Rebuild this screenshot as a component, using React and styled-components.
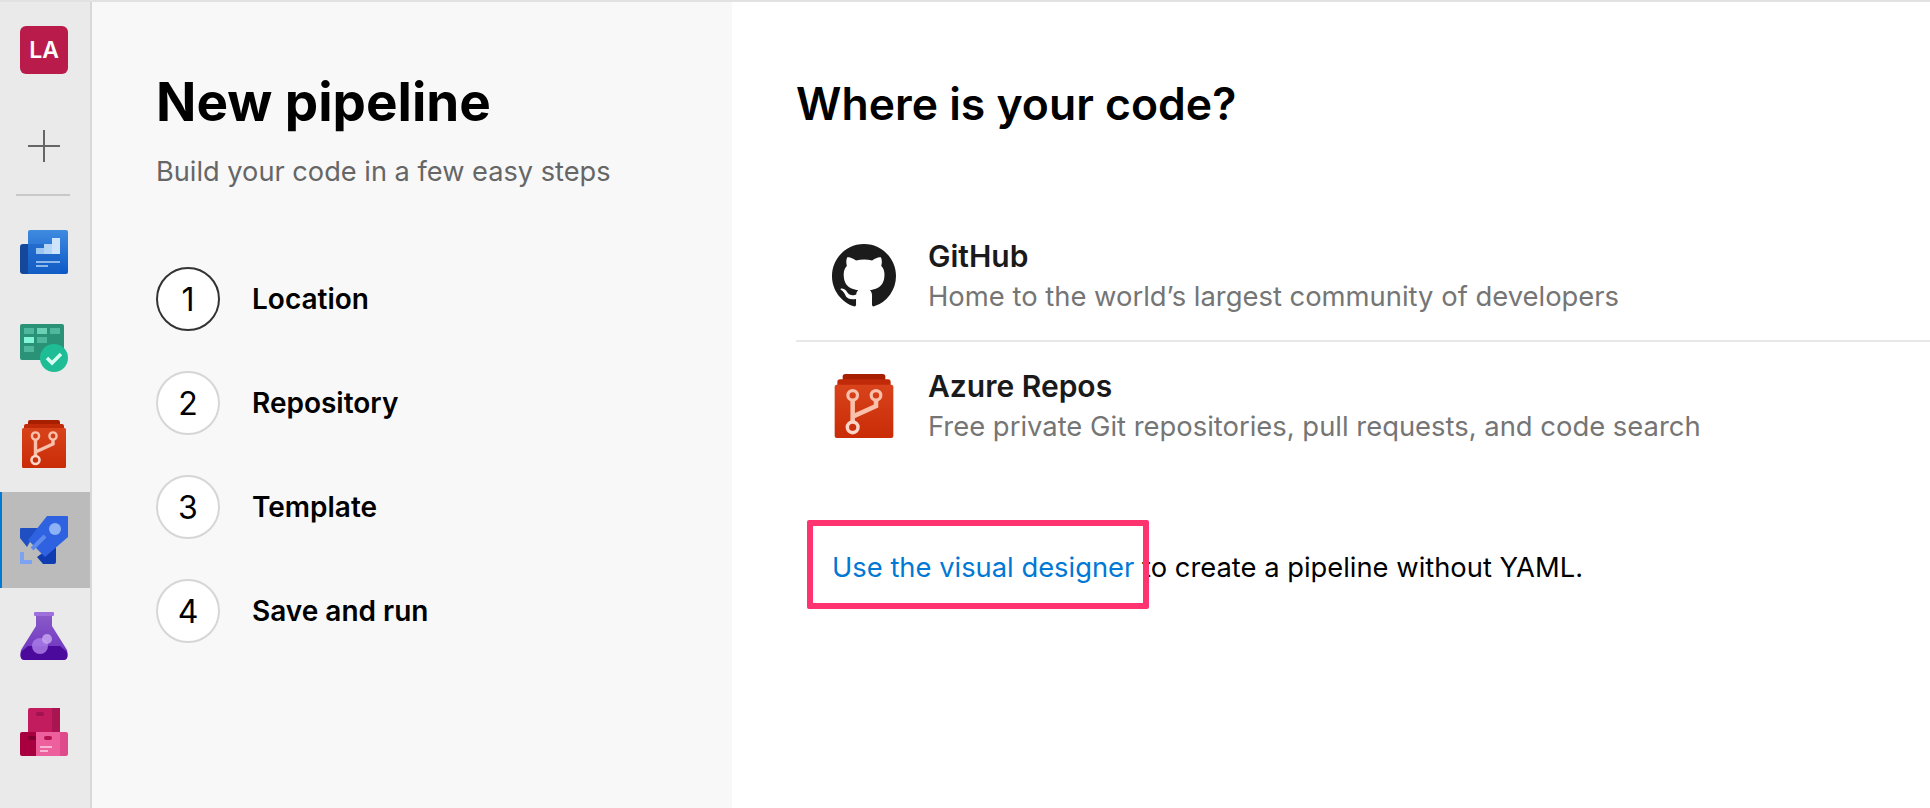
import { createGlobalStyle, styled } from "styled-components";

const GlobalStyle = createGlobalStyle`
  html, body { margin: 0; padding: 0; height: 100%; overflow: hidden; background: #fff; }
  body { font-family: Inter, "Noto Sans", sans-serif; color: #000; }
  * { box-sizing: border-box; }
`;

const Page = styled.div`
  display: flex;
  height: 808px;
  border-top: 2px solid #e2e2e2;
`;

const Sidebar = styled.nav`
  display: flex;
  flex-direction: column;
  width: 92px;
  flex-shrink: 0;
  background: #eaeaea;
  border-right: 2px solid #d8d8d8;
`;

const NavItem = styled.div`
  display: flex;
  align-items: center;
  justify-content: center;
  height: 96px;
  padding-right: 2px;
  background: ${(p) => (p.$active ? "#bbbbbb" : "transparent")};
  box-shadow: ${(p) => (p.$active ? "inset 2px 0 0 #0078d4" : "none")};
`;

const Avatar = styled.div`
  display: flex;
  align-items: center;
  justify-content: center;
  width: 48px;
  height: 48px;
  border-radius: 6px;
  background: #b91c4a;
  color: #fff;
  font-size: 23px;
  font-weight: 600;
`;

const NavDivider = styled.div`
  height: 2px;
  margin: 0 20px 8px 16px;
  background: #c8c8c8;
`;

const StepsPanel = styled.aside`
  width: 640px;
  flex-shrink: 0;
  padding: 68px 0 0 64px;
  background: #f8f8f8;
`;

const Title = styled.h1`
  margin: 0;
  font-size: 53px;
  line-height: 64px;
  font-weight: 700;
`;

const Subtitle = styled.p`
  margin: 20px 0 0;
  font-size: 27.2px;
  line-height: 36px;
  color: #666;
`;

const Steps = styled.ol`
  display: flex;
  flex-direction: column;
  gap: 40px;
  list-style: none;
  margin: 77px 0 0;
  padding: 0;
`;

const Step = styled.li`
  display: flex;
  align-items: center;
  gap: 32px;
  font-size: 28px;
  font-weight: 600;
`;

const StepNumber = styled.span`
  display: flex;
  align-items: center;
  justify-content: center;
  width: 64px;
  height: 64px;
  border-radius: 50%;
  border: 2px solid ${(p) => (p.$current ? "#333" : "#d6d6d6")};
  background: #fff;
  font-size: 32px;
  font-weight: 400;
`;

const Main = styled.main`
  flex: 1;
  padding: 74px 0 0 64px;
`;

const Heading = styled.h2`
  margin: 0;
  font-size: 44.5px;
  line-height: 56px;
  font-weight: 600;
`;

const SourceList = styled.div`
  margin-top: 80px;
`;

const Source = styled.div`
  display: flex;
  align-items: center;
  height: ${(p) => (p.$last ? "128px" : "130px")};
  padding-left: 36px;
  border-bottom: ${(p) => (p.$last ? "none" : "2px solid #e8e8e8")};
`;

const SourceIcon = styled.div`
  display: flex;
  align-items: center;
  justify-content: center;
  width: 64px;
  height: 64px;
  margin-right: 32px;
`;

const SourceName = styled.div`
  font-size: 30px;
  line-height: 40px;
  font-weight: 600;
  color: #1a1a1a;
`;

const SourceDesc = styled.div`
  font-size: 27.4px;
  line-height: 40px;
  color: #757575;
`;

const DesignerNote = styled.p`
  margin: 78px 0 0 36px;
  font-size: 27.35px;
  line-height: 40px;
`;

const DesignerLink = styled.a`
  position: relative;
  color: #0078d4;
`;

const Highlight = styled.span`
  position: absolute;
  left: -25px;
  top: -31px;
  width: 342px;
  height: 89px;
  border: 6px solid #ff3370;
  border-radius: 2px;
`;

function BoardsIcon() {
  return (
    <svg width="48" height="44" viewBox="0 0 48 44">
      <defs>
        <linearGradient id="boards" x1="0" y1="0" x2="0" y2="1">
          <stop offset="0" stopColor="#3f8be0" />
          <stop offset="1" stopColor="#0a58c8" />
        </linearGradient>
      </defs>
      <rect x="0" y="14" width="20" height="30" rx="3" fill="#15489b" />
      <rect x="8" y="0" width="40" height="44" rx="2" fill="url(#boards)" />
      <rect x="8" y="14" width="32" height="30" fill="#1c63c4" opacity="0.55" />
      <rect x="16" y="18" width="8" height="6" fill="#9cc6f2" />
      <rect x="24" y="14" width="8" height="10" fill="#b4d6f6" />
      <rect x="32" y="8" width="8" height="16" fill="#cfe4fa" />
      <rect x="16" y="31" width="24" height="2" fill="#8cb8ee" />
      <rect x="16" y="35" width="12" height="2" fill="#8cb8ee" />
    </svg>
  );
}

function TestPlansIcon() {
  return (
    <svg width="48" height="48" viewBox="0 0 48 48">
      <rect x="0" y="0" width="44" height="36" rx="2" fill="#2a9277" />
      <rect x="4" y="4" width="10" height="6" fill="#4fb89c" />
      <rect x="17" y="4" width="10" height="6" fill="#6bd0b4" />
      <rect x="30" y="4" width="10" height="6" fill="#4fb89c" />
      <rect x="4" y="13" width="10" height="6" fill="#84f5d6" />
      <rect x="17" y="13" width="10" height="6" fill="#4fb89c" />
      <rect x="4" y="22" width="10" height="6" fill="#4fb89c" />
      <circle cx="34" cy="34" r="14" fill="#1fbd95" />
      <path d="M27 34l5 5 9-9" fill="none" stroke="#d6fff2" strokeWidth="3.4" />
    </svg>
  );
}

function ReposIcon({ size = 48 }) {
  return (
    <svg width={size} height={size} viewBox="0 0 48 48">
      <defs>
        <linearGradient id={`repos${size}`} x1="0" y1="0" x2="0" y2="1">
          <stop offset="0" stopColor="#d8431c" />
          <stop offset="1" stopColor="#c92c06" />
        </linearGradient>
      </defs>
      <rect x="8" y="0" width="32" height="6" rx="2" fill="#a81f00" />
      <rect x="4" y="4" width="40" height="8" rx="2" fill="#c12a08" />
      <rect x="2" y="8" width="44" height="40" rx="1.5" fill={`url(#repos${size})`} />
      <path d="M15.5 20V36M33 20V24L15.5 32" fill="none" stroke="#f9c0ac" strokeWidth="3.4" />
      <circle cx="15.5" cy="16" r="3.6" fill="none" stroke="#f9c0ac" strokeWidth="2.4" />
      <circle cx="33" cy="16" r="3.6" fill="none" stroke="#f9c0ac" strokeWidth="2.4" />
      <circle cx="15.5" cy="40" r="4" fill="none" stroke="#fbd5c8" strokeWidth="2.6" />
    </svg>
  );
}

function PipelinesIcon() {
  return (
    <svg width="48" height="48" viewBox="0 0 48 48">
      <path d="M0 13Q0 12 1 12H18L7 31L0 22Z" fill="#1f4fc0" />
      <path d="M36 27V46Q36 48 34 48H23L17 41Z" fill="#0f3cb0" />
      <path d="M27 0H47Q48 0 48 1V21L25 41L8 24Z" fill="#2f62e0" />
      <circle cx="35" cy="13" r="6" fill="#8eb2f6" />
      <path d="M25 20L12 33" stroke="#5f8cec" strokeWidth="4" />
      <path d="M0 36H4V44H12V48H0Z" fill="#7ea2f2" />
    </svg>
  );
}

function TestIcon() {
  return (
    <svg width="48" height="48" viewBox="0 0 48 48">
      <defs>
        <linearGradient id="flask" x1="0" y1="0" x2="0" y2="1">
          <stop offset="0" stopColor="#8a5cc8" />
          <stop offset="1" stopColor="#6b2fc0" />
        </linearGradient>
      </defs>
      <path d="M16 2H32V14L47 38Q49 48 43 48H5Q-1 48 1 38L16 14Z" fill="url(#flask)" />
      <path d="M8 34H40L47 40Q49 48 43 48H5Q-1 48 1 40Z" fill="#4c0a9c" />
      <rect x="14" y="0" width="20" height="4" rx="1" fill="#9f70dc" />
      <circle cx="20" cy="34" r="8" fill="#a87be6" opacity="0.85" />
      <circle cx="27" cy="27" r="5" fill="#c4a4ee" opacity="0.85" />
    </svg>
  );
}

function ArtifactsIcon() {
  return (
    <svg width="48" height="48" viewBox="0 0 48 48">
      <path d="M10 0H32V24H8V2Q8 0 10 0Z" fill="#c21b5e" />
      <rect x="32" y="0" width="8" height="24" fill="#a81550" />
      <rect x="16" y="4" width="8" height="4" rx="2" fill="#a01350" />
      <path d="M2 24H16V48H2Q0 48 0 46V26Q0 24 2 24Z" fill="#a8003f" />
      <rect x="16" y="24" width="24" height="24" fill="#ee5f9e" />
      <path d="M40 24H46Q48 24 48 26V46Q48 48 46 48H40Z" fill="#de4a8a" />
      <rect x="8" y="28" width="8" height="4" rx="2" fill="#7d0030" />
      <rect x="24" y="28" width="8" height="4" rx="2" fill="#b3114f" />
      <rect x="20" y="38" width="12" height="2" fill="#f9b4d2" />
      <rect x="20" y="42" width="8" height="2" fill="#f9b4d2" />
    </svg>
  );
}

function GithubMark() {
  return (
    <svg width="64" height="64" viewBox="0 0 16 16" fill="#1b1b1b">
      <path d="M8 0C3.58 0 0 3.58 0 8c0 3.54 2.29 6.53 5.47 7.59.4.07.55-.17.55-.38 0-.19-.01-.82-.01-1.49-2.01.37-2.53-.49-2.69-.94-.09-.23-.48-.94-.82-1.13-.28-.15-.68-.52-.01-.53.63-.01 1.08.58 1.23.82.72 1.21 1.87.87 2.33.66.07-.52.28-.87.51-1.07-1.78-.2-3.64-.89-3.64-3.95 0-.87.31-1.59.82-2.15-.08-.2-.36-1.02.08-2.12 0 0 .67-.21 2.2.82.64-.18 1.32-.27 2-.27.68 0 1.36.09 2 .27 1.53-1.04 2.2-.82 2.2-.82.44 1.1.16 1.92.08 2.12.51.56.82 1.27.82 2.15 0 3.07-1.87 3.75-3.65 3.95.29.25.54.73.54 1.48 0 1.07-.01 1.93-.01 2.2 0 .21.15.46.55.38A8.013 8.013 0 0016 8c0-4.42-3.58-8-8-8z" />
    </svg>
  );
}

function PlusIcon() {
  return (
    <svg width="32" height="32" viewBox="0 0 32 32">
      <path d="M16 0V32M0 16H32" stroke="#666" strokeWidth="2" />
    </svg>
  );
}

const steps = ["Location", "Repository", "Template", "Save and run"];

export default function App() {
  return (
    <>
      <GlobalStyle />
      <Page>
        <Sidebar>
          <NavItem><Avatar>LA</Avatar></NavItem>
          <NavItem><PlusIcon /></NavItem>
          <NavDivider />
          <NavItem><BoardsIcon /></NavItem>
          <NavItem><TestPlansIcon /></NavItem>
          <NavItem><ReposIcon /></NavItem>
          <NavItem $active><PipelinesIcon /></NavItem>
          <NavItem><TestIcon /></NavItem>
          <NavItem><ArtifactsIcon /></NavItem>
        </Sidebar>
        <StepsPanel>
          <Title>New pipeline</Title>
          <Subtitle>Build your code in a few easy steps</Subtitle>
          <Steps>
            {steps.map((name, i) => (
              <Step key={name}>
                <StepNumber $current={i === 0}>{i + 1}</StepNumber>
                {name}
              </Step>
            ))}
          </Steps>
        </StepsPanel>
        <Main>
          <Heading>Where is your code?</Heading>
          <SourceList>
            <Source>
              <SourceIcon><GithubMark /></SourceIcon>
              <div>
                <SourceName>GitHub</SourceName>
                <SourceDesc>Home to the world’s largest community of developers</SourceDesc>
              </div>
            </Source>
            <Source $last>
              <SourceIcon><ReposIcon size={64} /></SourceIcon>
              <div>
                <SourceName>Azure Repos</SourceName>
                <SourceDesc>Free private Git repositories, pull requests, and code search</SourceDesc>
              </div>
            </Source>
          </SourceList>
          <DesignerNote>
            <DesignerLink>
              Use the visual designer
              <Highlight />
            </DesignerLink>{" "}
            to create a pipeline without YAML.
          </DesignerNote>
        </Main>
      </Page>
    </>
  );
}
